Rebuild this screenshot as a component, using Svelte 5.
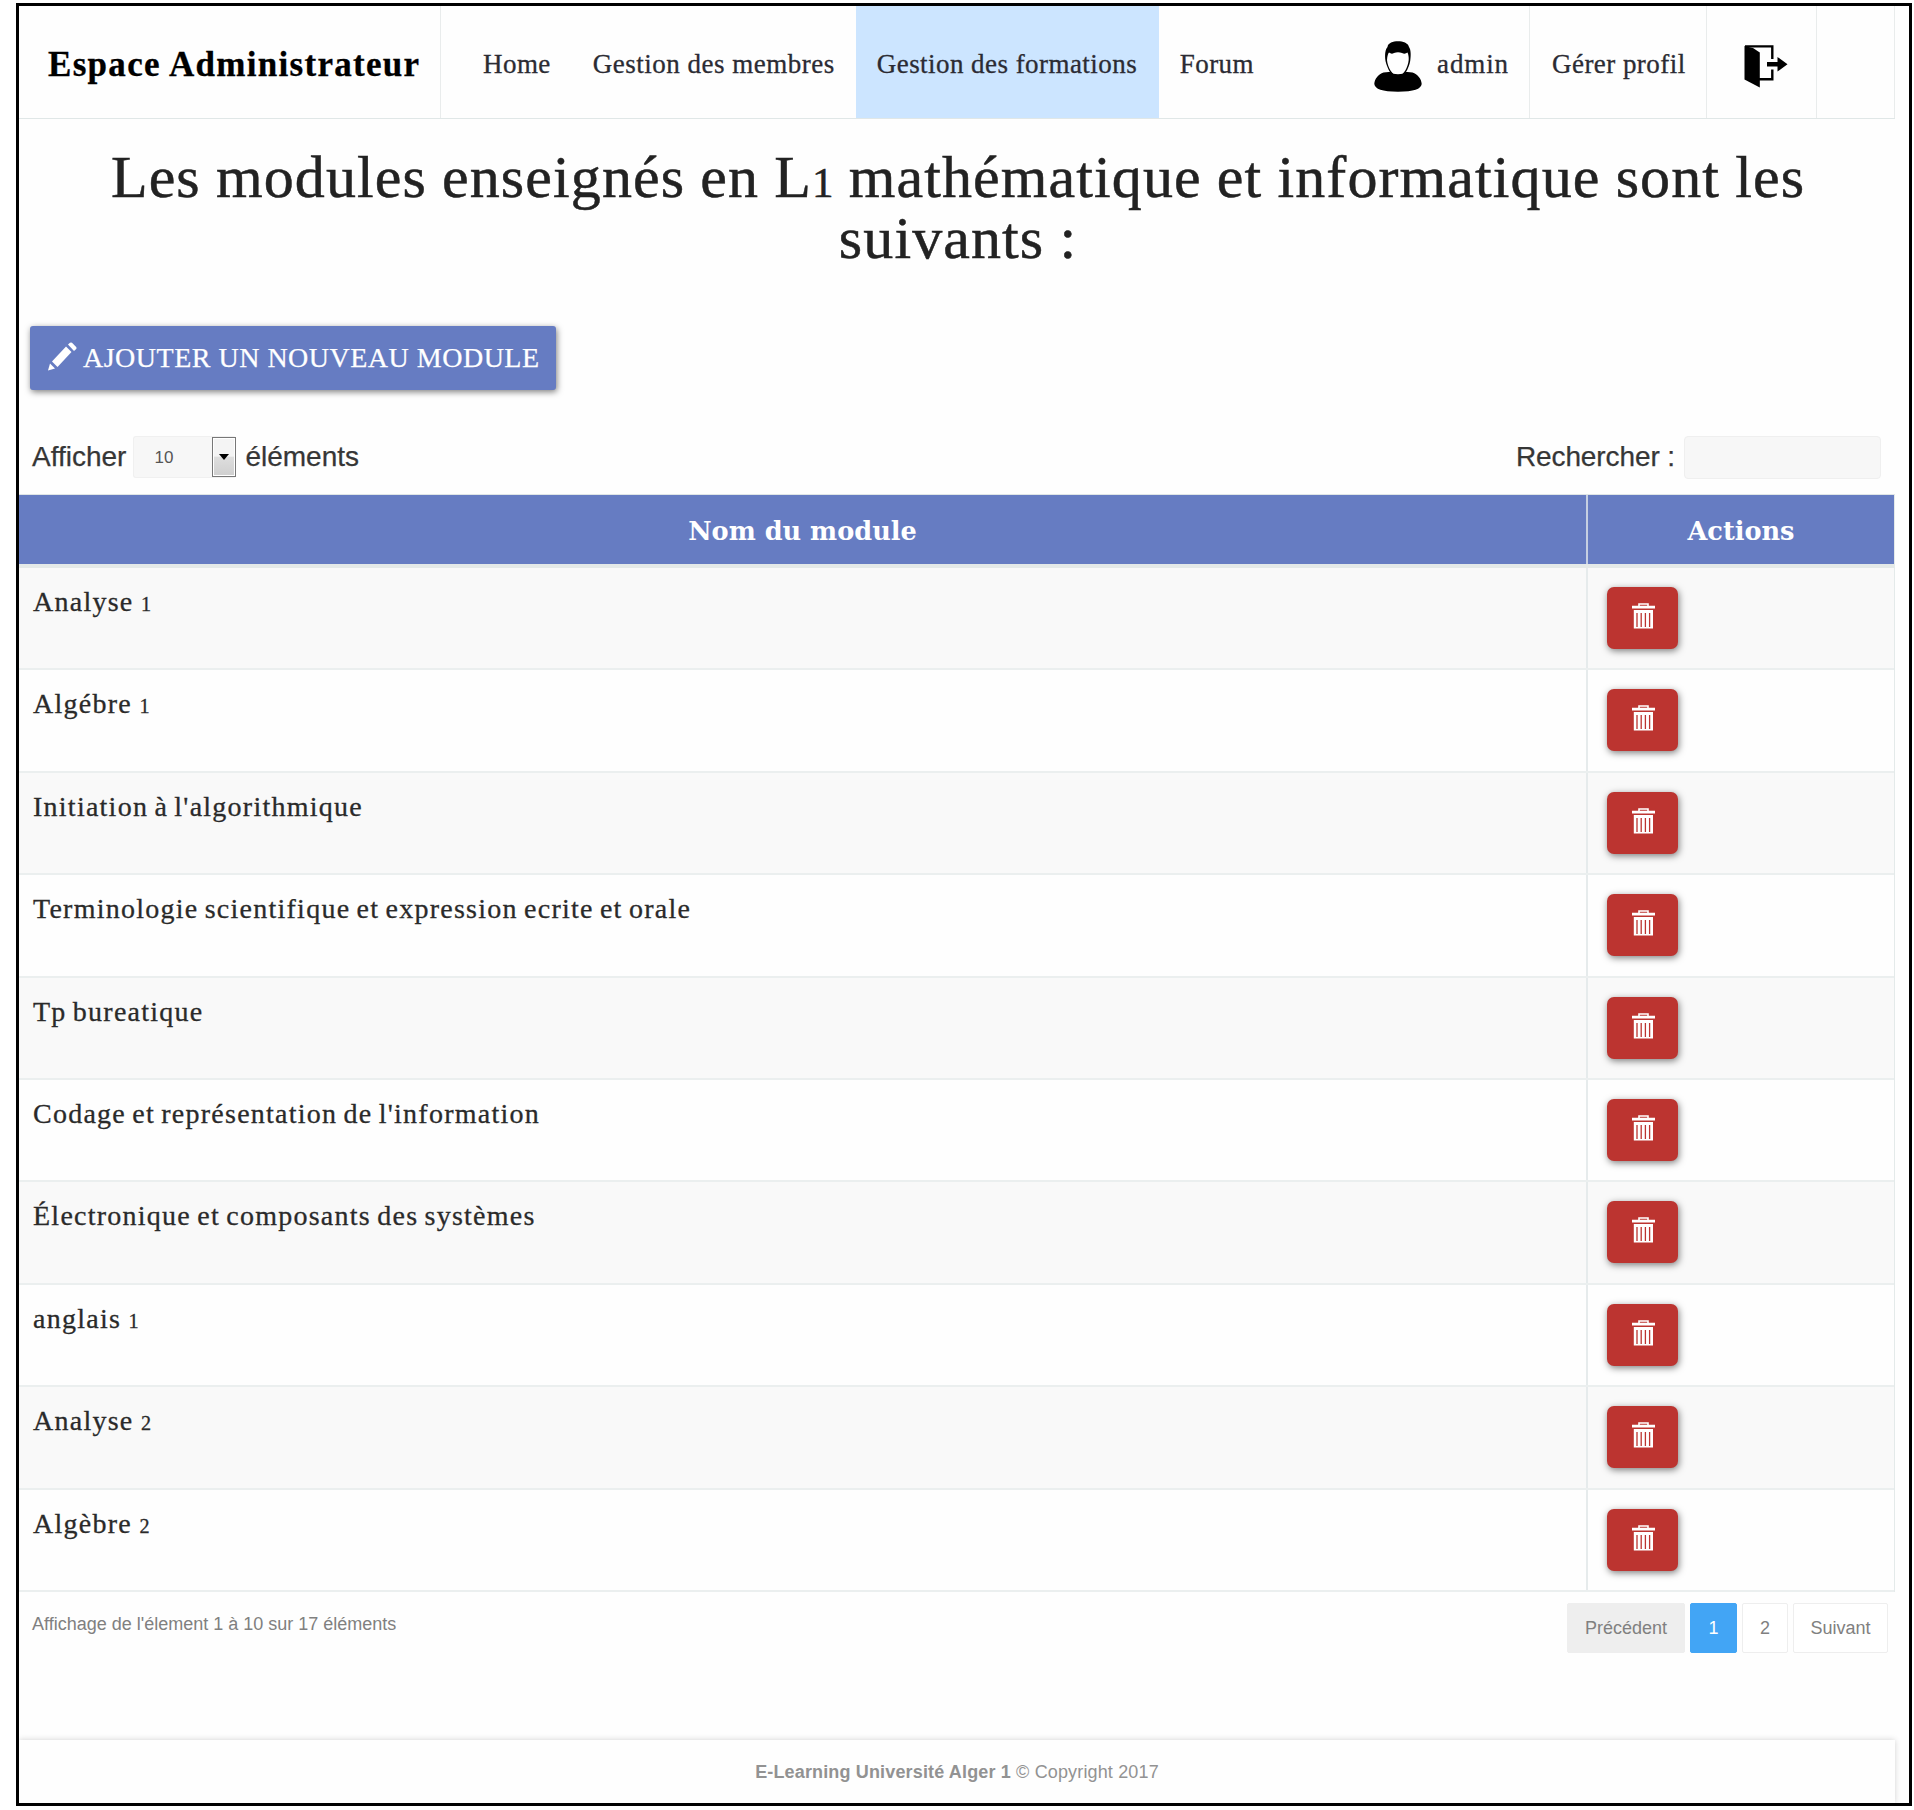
<script>
  const modules = [
    'Analyse 1',
    'Algébre 1',
    "Initiation à l'algorithmique",
    'Terminologie scientifique et expression ecrite et orale',
    'Tp bureatique',
    "Codage et représentation de l'information",
    'Électronique et composants des systèmes',
    'anglais 1',
    'Analyse 2',
    'Algèbre 2'
  ];
  // Digits are set apart so they can be drawn at x-height, like old-style figures.
  const parts = (s) => s.split(/(\d+)/).filter(Boolean);
</script>

<div class="frame">
  <nav>
    <div class="brand">Espace Administrateur</div>
    <div class="links">
      <span class="link">Home</span>
      <span class="link">Gestion des membres</span>
      <span class="link active">Gestion des formations</span>
      <span class="link">Forum</span>
    </div>
    <div class="cell user">
      <svg width="48" height="51" viewBox="0 0 48 51">
        <path d="M11.5 20 C10.5 13 11.5 8 13.5 6 C14 2 19 .3 24 .3 C29 .3 34 2 35 6 C37 9 37 14 36.200 20 C35 27 30 37 24 37 C18 37 13 27 11.500 20 Z" />
        <path fill="#fff" d="M13 19 C13.300 15 14 12.500 15 11.500 Q17.500 13.500 20 12 Q24 10.500 28 12 Q31 13.500 33.500 11.500 C34.400 13.500 34.900 16 34.700 19 C34 26 29.500 35 24 35 C18.500 35 13.500 26 13 19 Z" />
        <path d="M9.500 31.500 C11.500 31 14.500 30.800 16.500 31 C18 34 30 34 31.500 31 C34 30.800 36.500 31 38.500 31.500 C43.500 33 47.500 38 47.700 43 C47 48 40 50.700 24 50.700 C8 50.700 1 48 .3 43 C.5 38 4.500 33 9.500 31.500 Z" />
      </svg>
      <span>admin</span>
    </div>
    <div class="cell profile">Gérer profil</div>
    <div class="cell exit">
      <svg width="44" height="43" viewBox="0 0 44 43">
        <path fill="none" stroke="#000" stroke-width="2.400" d="M1 1.400 H28.300 V14 M28.300 24.500 V34.200 H15" />
        <path d="M.5 1 L9 3 L15.800 7.500 V42.500 L.5 34.500 Z" />
        <path d="M23 17 H33.500 V12 L43.500 19.200 L33.500 26.500 V21.500 H23 Z" />
      </svg>
    </div>
    <div class="cell blank"></div>
  </nav>

  <h1>Les modules enseignés en L<span class="fig">1</span> mathématique et informatique sont les<br />suivants :</h1>

  <button class="add">
    <svg width="29" height="29" viewBox="0 0 29 29" fill="#fff">
      <path d="M0 28.500 L2 21.500 L7 26.500 Z" />
      <path d="M4 19.500 L18 4.500 L23.500 10 L9.500 25 Z" />
      <path d="M20 2.500 L22 .8 Q23 0 24 .8 L28.200 5 Q29 6 28.200 7 L26 9 Z" />
    </svg>
    <span>AJOUTER UN NOUVEAU MODULE</span>
  </button>

  <div class="tools">
    <div class="length">
      <span>Afficher</span>
      <div class="select">
        <span class="value">10</span>
        <span class="arrow"><svg width="10" height="6" viewBox="0 0 10 6"><path d="M0 0 H10 L5 6 Z" /></svg></span>
      </div>
      <span>éléments</span>
    </div>
    <div class="search">
      <span>Rechercher :</span>
      <div class="input"></div>
    </div>
  </div>

  <div class="table">
    <div class="row head">
      <div class="name">Nom du module</div>
      <div class="actions">Actions</div>
    </div>
    {#each modules as m}
      <div class="row">
        <div class="name">{#each parts(m) as p}{#if /\d/.test(p)}<span class="fig">{p}</span>{:else}<span class="word">{p}</span>{/if}{/each}</div>
        <div class="actions">
          <button class="del" aria-label="Supprimer">
            <svg width="23" height="26" viewBox="0 0 23 26">
              <path fill="none" stroke="#fff" stroke-width="1.600" d="M7 3 V1 H16 V3" />
              <path fill="#fff" d="M0 2.800 H23 V5.600 H0 Z M1.800 7 H21 V25.500 H1.800 Z" />
              <path stroke="#bc3430" stroke-width="1.300" d="M5 10 V24 M9.200 10 V24 M13.400 10 V24 M17.600 10 V24" />
            </svg>
          </button>
        </div>
      </div>
    {/each}
  </div>

  <div class="bottom">
    <div class="info">Affichage de l'élement 1 à 10 sur 17 éléments</div>
    <div class="pages">
      <span class="page prev">Précédent</span>
      <span class="page current">1</span>
      <span class="page two">2</span>
      <span class="page next">Suivant</span>
    </div>
  </div>

  <footer><b>E-Learning Université Alger 1</b> © Copyright 2017</footer>
</div>

<style>
  :global(body) { background: #fff; }
  * { box-sizing: border-box; }
  .frame {
    width: 1896px;
    height: 1803px;
    margin: 3px 0 0 16px;
    border: 3px solid #000;
    padding-right: 14px;
    overflow: hidden;
    display: flex;
    flex-direction: column;
    background: #fefefe;
    font-family: 'Liberation Sans', Arial, sans-serif;
  }
  nav {
    height: 113px;
    flex: none;
    display: flex;
    border-bottom: 1px solid #e0e7e7;
    font: 27px/30px 'Liberation Serif', serif;
    letter-spacing: .45px;
    -webkit-text-stroke: .3px currentColor;
    color: #2b2b33;
  }
  .brand {
    width: 422px;
    padding: 39px 0 0 29px;
    border-right: 1px solid #e9ecec;
    font-size: 35px;
    line-height: 40px;
    font-weight: 700;
    letter-spacing: 1.3px;
    color: #000;
    white-space: nowrap;
  }
  .links { display: flex; flex: 1; padding-left: 21px; white-space: nowrap; }
  .link { padding: 43px 21px 0; }
  .link:nth-child(2) { letter-spacing: .5px; }
  .active { background: #cce5ff; width: 303px; }
  .cell { border-right: 1px solid #e9ecec; padding-top: 43px; white-space: nowrap; }
  .user { display: flex; gap: 15px; width: 156px; letter-spacing: .9px; }
  .user svg { margin-top: -8px; flex: none; }
  .profile { width: 177px; padding-left: 22px; }
  .exit { width: 110px; padding: 39px 0 0 37px; }
  .blank { width: 78px; }
  svg { display: block; }

  h1 {
    margin: 28px 0 0;
    padding-left: 2px;
    text-align: center;
    font: 400 60px/61px 'Liberation Serif', serif;
    letter-spacing: 1.1px;
    word-spacing: -1px;
    -webkit-text-stroke: .5px currentColor;
    color: #222;
  }
  .fig { font-size: .72em; line-height: 0; padding: 0 .06em; }
  h1 .fig { padding: 0; letter-spacing: 0; }
  .word { white-space: pre; }

  .add {
    flex: none;
    width: 526px;
    height: 64px;
    margin: 57px 0 0 11px;
    padding: 0 0 0 18px;
    display: flex;
    align-items: center;
    gap: 6px;
    border: 0;
    border-radius: 3px;
    background: #667cc2;
    color: #fff;
    box-shadow: 1px 2px 6px rgba(0, 0, 0, .5);
    font: 28px/32px 'Liberation Serif', serif;
    letter-spacing: .5px;
    -webkit-text-stroke: .25px currentColor;
    white-space: nowrap;
  }
  .add svg { margin-top: -4px; }

  .tools {
    flex: none;
    height: 43px;
    margin: 46px 13px 0 13px;
    display: flex;
    justify-content: space-between;
    font-size: 28px;
    line-height: 41px;
    color: #363636;
    -webkit-text-stroke: .25px currentColor;
  }
  .length, .search { display: flex; }
  .select {
    width: 103px;
    height: 42px;
    margin: 0 9px 0 7px;
    padding-left: 20px;
    display: flex;
    align-items: center;
    justify-content: space-between;
    background: #f7f7f7;
    border: 1px solid #f0f0f0;
    border-right: 0;
    border-radius: 3px;
  }
  .value { font-size: 17px; color: #555; -webkit-text-stroke: 0; padding-top: 1px; }
  .arrow {
    width: 24px;
    height: 40px;
    display: grid;
    place-items: center;
    border: 1px solid #777;
    box-shadow: inset 0 0 0 1px #fff;
    background: linear-gradient(#f4f4f4 0 48%, #dedede 50%, #cfcfcf);
  }
  .search { letter-spacing: -.1px; }
  .input {
    width: 197px;
    height: 43px;
    margin: 0 1px 0 9px;
    background: #f7f7f7;
    border: 1px solid #efefef;
    border-radius: 4px;
  }

  .table { flex: none; margin-top: 15px; border-top: 1px solid #dfe5e6; border-right: 1px solid #e4eaea; }
  .row {
    display: flex;
    height: 102.4px;
    border-bottom: 2px solid #ebefef;
    font: 28px/32px 'Liberation Serif', serif;
    letter-spacing: 1.25px;
    word-spacing: -2px;
    -webkit-text-stroke: .3px currentColor;
    color: #2a2a2a;
    background: #fefefe;
  }
  .row:nth-child(even) { background: #f9f9f9; }
  .name { width: 1569px; padding: 18px 0 0 14px; border-right: 2px solid #e6ebec; }
  .actions { flex: 1; padding: 19px 0 0 19px; }
  .head {
    height: 73px;
    background: #667cc2;
    color: #fff;
    border-bottom: 4px solid #e4e9e8;
    font: 700 25.600px/32px 'DejaVu Serif', serif;
    letter-spacing: 0;
    word-spacing: 0;
    -webkit-text-stroke: 0;
    text-align: center;
  }
  .head .name { padding: 20px 0 0; border-right-color: #c5cfe2; }
  .head .actions { padding: 20px 0 0; }
  .del {
    width: 71px;
    height: 62px;
    padding: 16px 0 0 25px;
    border: 0;
    border-radius: 7px;
    background: #bc3430;
    box-shadow: 1px 2px 7px rgba(0, 0, 0, .5);
    display: flex;
    align-items: flex-start;
  }

  .bottom {
    flex: none;
    height: 148px;
    padding: 11px 7px 0 13px;
    display: flex;
    justify-content: space-between;
    font-size: 18px;
    line-height: 22px;
    color: #808080;
  }
  .info { padding-top: 10px; }
  .pages { display: flex; gap: 5px; }
  .page { height: 50px; padding-top: 13px; text-align: center; border: 1px solid #eee; border-radius: 2px; background: #fff; }
  .prev { width: 118px; background: #eee; }
  .current { width: 47px; background: #42a5f5; border-color: #42a5f5; color: #fff; }
  .two { width: 46px; }
  .next { width: 95px; }

  footer {
    flex: 1;
    padding-top: 21px;
    text-align: center;
    font-size: 18px;
    line-height: 22px;
    letter-spacing: .15px;
    color: #929292;
    box-shadow: 0 0 6px rgba(0, 0, 0, .18);
  }
</style>
